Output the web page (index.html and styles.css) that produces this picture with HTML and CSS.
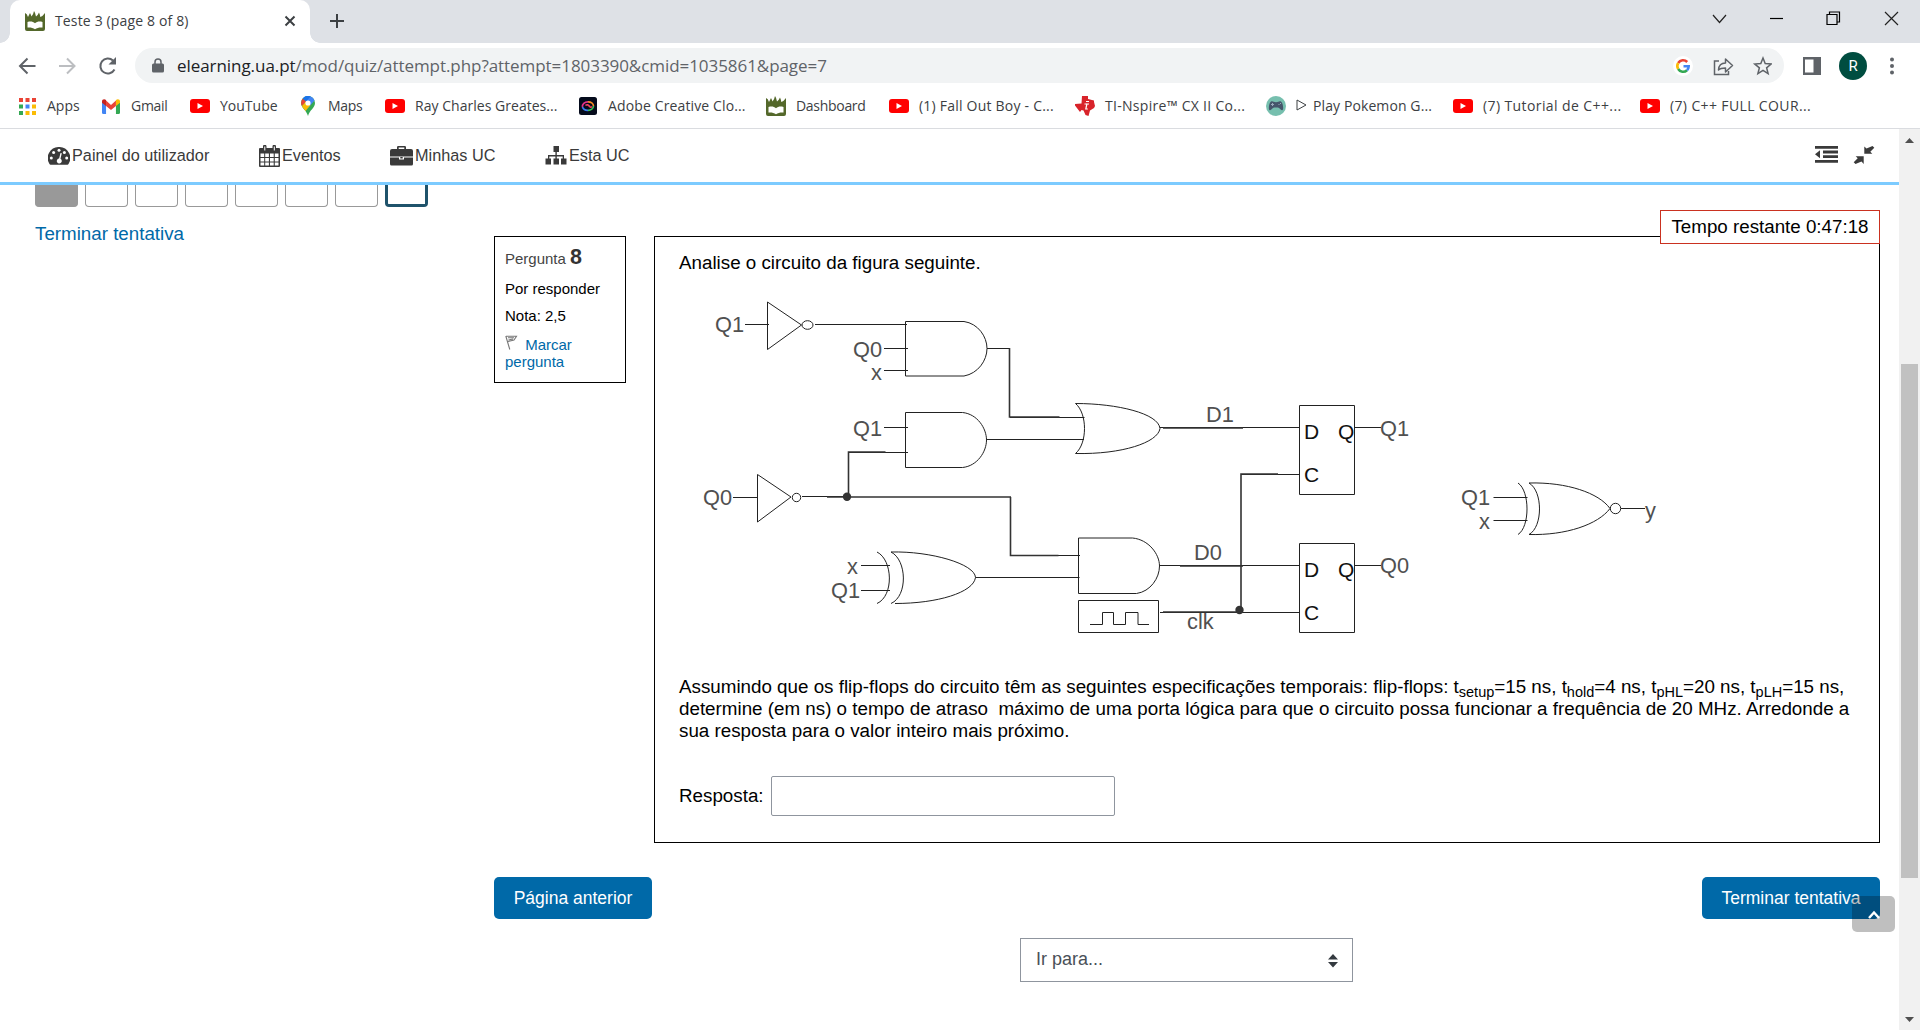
FILE: index.html
```html
<!DOCTYPE html>
<html lang="pt">
<head>
<meta charset="utf-8">
<title>Teste 3 (page 8 of 8)</title>
<link rel="stylesheet" href="styles.css">
</head>
<body>
<svg class="defs" width="0" height="0" aria-hidden="true">
  <symbol id="ua" viewBox="0 0 20 20"><path fill="#54682b" d="M0 2q2 .5 3 4Q4 4 5 2q1 1.500 1.500 3.500Q8.500 3 9 0q1.500 2 2 5.500Q13 4 14 1.500q1 2 1.300 4.500Q18 5 20 2v16q0 2-2 2H2q-2 0-2-2z"/><path fill="#fff" d="M2.500 11c3-.8 5.500-.5 7.500 1.200 2-1.700 4.500-2 7.500-1.200v5.500c-2.500-.2-5.500 0-7.500 1.800-2-1.800-5-2-7.500-1.800z"/></symbol>
  <symbol id="yt" viewBox="0 0 20 14"><rect width="20" height="14" rx="3" fill="#f00"/><path fill="#fff" d="M7.500 4v6l5.500-3z"/></symbol>
</svg>
<header class="tabs">
  <div class="tab">
    <svg class="fav" width="20" height="20"><use href="#ua"/></svg>
    <span class="tab-title">Teste 3 (page 8 of 8)</span>
    <svg class="tab-close" width="12" height="12" viewBox="0 0 12 12"><path d="M1.500 1.500l9 9M10.500 1.500l-9 9" stroke="#3c4043" stroke-width="2"/></svg>
  </div>
  <svg class="plus" width="16" height="16" viewBox="0 0 16 16"><path d="M8 1v14M1 8h14" stroke="#3c4043" stroke-width="2"/></svg>
  <svg class="winctl" width="200" height="24" viewBox="0 0 200 24" fill="none" stroke="#222" stroke-width="1.200"><path d="M13 9l6.500 7.500L26 9"/><path d="M70 12.500h13" stroke="#000"/><path d="M127 8.500h10v10h-10zM129.500 8.500v-2.500h10v10h-2.500" stroke="#000"/><path d="M185 6l13 13M198 6l-13 13"/></svg>
</header>
<div class="toolbar">
  <svg class="navs" width="104" height="24" viewBox="0 0 104 24" fill="none" stroke-width="2"><path stroke="#5f6368" d="M17.500 12H2.500M9.500 4.500L2 12l7.500 7.500"/><path stroke="#bcbec1" d="M41 12h15M49 4.500l7.500 7.500-7.500 7.500"/><path stroke="#5f6368" d="M96.500 15.500A7.500 7.500 0 1 1 95 6.500"/><path fill="#5f6368" d="M98 3v7.500h-7.500z"/></svg>
  <div class="omnibox">
    <svg width="12" height="16" viewBox="0 0 12 16"><path fill="#5f6368" d="M1.500 5.500h9A1.500 1.500 0 0 1 12 7v6a1.500 1.500 0 0 1-1.500 1.500h-9A1.500 1.500 0 0 1 0 13V7a1.500 1.500 0 0 1 1.500-1.500z"/><path fill="none" stroke="#5f6368" stroke-width="1.500" d="M3 6V4a3 3 0 0 1 6 0v2"/></svg>
    <span class="url"><b>elearning.ua.pt</b>/mod/quiz/attempt.php?attempt=1803390&amp;cmid=1035861&amp;page=7</span>
    <svg class="omni-icons" width="100" height="24" viewBox="0 0 100 24" fill="none"><circle cx="11" cy="12" r="10" fill="#fff"/><g stroke-width="2.600"><path stroke="#ea4335" d="M6.200 9A5.700 5.700 0 0 1 15.200 8"/><path stroke="#fbbc05" d="M6.200 15A5.700 5.700 0 0 1 6.200 9"/><path stroke="#34a853" d="M15 16.200A5.700 5.700 0 0 1 6.200 15"/><path stroke="#4285f4" d="M11.500 12.200h5.200A5.700 5.700 0 0 1 15 16.200"/></g><g stroke="#5f6368" stroke-width="1.500"><path d="M47 7h-4.500v13.500h14V17"/><path d="M46.500 16c.3-5 3-7 7-7V5l7 6.500-7 6.500V14c-3.500 0-5.500.5-7 2z" stroke-linejoin="round"/><path d="M91 4l2.200 5.600 6 .4-4.600 3.800 1.500 5.800L91 16.400l-5.100 3.200 1.500-5.800L82.800 10l6-.4z"/></g></svg>
  </div>
  <svg class="panel" width="18" height="18" viewBox="0 0 18 18"><path fill="#5f6368" fill-rule="evenodd" d="M0 0h18v18H0zM2 2.500v13h8.500v-13z"/></svg>
  <span class="avatar">R</span>
  <svg class="dots" width="4" height="18" viewBox="0 0 4 18" fill="#5f6368"><circle cx="2" cy="2.500" r="2"/><circle cx="2" cy="9" r="2"/><circle cx="2" cy="15.500" r="2"/></svg>
</div>
<nav class="bookmarks">
  <a class="bm b1"><svg width="17" height="17" viewBox="0 0 17 17"><path fill="#ea4335" d="M0 0h4v4H0zM6.500 0h4v4h-4zM13 0h4v4h-4z"/><path fill="#34a853" d="M0 6.500h4v4H0zM0 13h4v4H0z"/><path fill="#4285f4" d="M6.500 6.500h4v4h-4z"/><path fill="#fbbc05" d="M13 6.500h4v4h-4zM6.500 13h4v4h-4zM13 13h4v4h-4z"/></svg><span>Apps</span></a>
  <a class="bm b2"><svg width="18" height="15" viewBox="0 0 20 15" preserveAspectRatio="none"><path fill="#4285f4" d="M0 3l4.500 3v9H1.500A1.500 1.500 0 0 1 0 13.500z"/><path fill="#34a853" d="M20 3l-4.500 3v9h3a1.500 1.500 0 0 0 1.500-1.500z"/><path fill="#ea4335" d="M4.500 1.500L10 6l5.500-4.500V7L10 11 4.500 7z"/><path fill="#c5221f" d="M0 2.500C0 .3 2.500-.6 4.500 1v6L0 3.800z"/><path fill="#fbbc04" d="M20 2.500C20 .3 17.500-.6 15.500 1v6L20 3.800z"/></svg><span>Gmail</span></a>
  <a class="bm b3"><svg width="20" height="14"><use href="#yt"/></svg><span>YouTube</span></a>
  <a class="bm b4"><svg width="14" height="20" viewBox="0 0 14 20"><path fill="#34a853" d="M0 7a7 7 0 0 1 14 0c0 5-5.500 7-7 13C5.500 14 0 12 0 7z"/><path fill="#4285f4" d="M3 1.200A7 7 0 0 1 13.500 4.500L7 12z"/><path fill="#1a73e8" d="M1.500 2.700A7 7 0 0 1 9.500.4L5 5.500z"/><path fill="#ea4335" d="M1.500 2.700L5 5.500 1 10A7 7 0 0 1 1.500 2.700z"/><path fill="#fbbc04" d="M1 10l4-4.500L9.500 9l-5 6C3 13 1.500 11.500 1 10z"/><circle cx="7" cy="7" r="2.600" fill="#fff"/></svg><span>Maps</span></a>
  <a class="bm b5"><svg width="20" height="14"><use href="#yt"/></svg><span>Ray Charles Greates...</span></a>
  <a class="bm b6"><svg width="18" height="18" viewBox="0 0 18 18" fill="none" stroke-width="1.700"><rect width="18" height="18" rx="2.500" fill="#050b1c"/><path stroke="#e8308a" d="M3.500 10A5.500 4.500 0 0 1 9 4.800"/><path stroke="#f58a24" d="M9 4.800A5.200 4.400 0 0 1 14.500 9"/><path stroke="#39c556" d="M14.500 9A5.500 4.500 0 0 1 9 13.300"/><path stroke="#3a7df0" d="M9 13.300A5.500 4.500 0 0 1 3.500 10"/><path stroke="#ee4360" d="M6.500 8.500c1.500-1.500 3-.5 4 .8s1.500 1.200 2.500.2"/></svg><span>Adobe Creative Clo...</span></a>
  <a class="bm b7"><svg width="20" height="20"><use href="#ua"/></svg><span>Dashboard</span></a>
  <a class="bm b8"><svg width="20" height="14"><use href="#yt"/></svg><span>(1) Fall Out Boy - C...</span></a>
  <a class="bm b9"><svg width="20" height="20" viewBox="0 0 20 20"><path fill="#d8232a" d="M7 0h6v3l6 1.500V6l1 4-1 2-4 2.500-1.500 5.500-3-1-2-4.500-2-.5-1.500 2L0 9.500V8l6.500-.5z"/><path d="M11 5.500h3M9.500 8H14M12 7.500l-1.200 5.500h2" stroke="#fff" stroke-width="1.200" fill="none"/></svg><span>TI-Nspire™ CX II Co...</span></a>
  <a class="bm b10"><svg width="20" height="20" viewBox="0 0 20 20"><circle cx="10" cy="10" r="10" fill="#76bfae"/><path fill="#46566b" d="M5 5.500c2-.8 2.500.7 5 .7s3-1.500 5-.7c1.800 1 3 7.500 1.500 8.500s-3-2.500-4.500-2.500H8c-1.500 0-3 3.500-4.500 2.500S3.200 6.500 5 5.500z"/><path fill="#9ab" d="M5 8h1v-1h1v1h1v1H7v1H6V9H5zM12.500 8h1v1h-1zM14 7h1v1h-1z"/></svg><span><svg class="tri" width="11" height="12" viewBox="0 0 11 12"><path d="M1 1v10L10 6z" fill="none" stroke="#3c4043"/></svg>Play Pokemon G...</span></a>
  <a class="bm b11"><svg width="20" height="14"><use href="#yt"/></svg><span>(7) Tutorial de C++...</span></a>
  <a class="bm b12"><svg width="20" height="14"><use href="#yt"/></svg><span>(7) C++ FULL COUR...</span></a>
</nav>
<div class="viewport">
<div class="page">
  <nav class="sitenav">
    <a class="n1"><svg width="22" height="18" viewBox="0 0 22 18"><path fill="#3a3a3a" d="M11 0a11 11 0 0 1 9.500 17q-.4.700-1 .7h-17q-.6 0-1-.7A11 11 0 0 1 11 0z"/><g fill="#fff"><circle cx="11" cy="3.300" r="1.500"/><circle cx="5.600" cy="5.500" r="1.500"/><circle cx="3.300" cy="11" r="1.500"/><circle cx="16.400" cy="5.500" r="1.500"/><circle cx="18.700" cy="11" r="1.500"/><path d="M12.500 6l1.300.3-1.300 5.500a2.500 2.500 0 1 1-1.400-.3z"/></g></svg>Painel do utilizador</a>
    <a class="n2"><svg width="21" height="22" viewBox="0 0 21 22"><path fill="#3a3a3a" d="M1 3h3V1.500a1.700 1.700 0 0 1 3.500 0V3h6V1.500a1.700 1.700 0 0 1 3.500 0V3h3a1 1 0 0 1 1 1v17a1 1 0 0 1-1 1H1a1 1 0 0 1-1-1V4a1 1 0 0 1 1-1z"/><path fill="#fff" d="M1.500 8.500h3.700v3.500H1.500zM6.200 8.500h3.700v3.500H6.200zM11 8.500h3.700v3.500H11zM15.800 8.500h3.700v3.500h-3.700zM1.500 13h3.700v3.500H1.500zM6.200 13h3.700v3.500H6.200zM11 13h3.700v3.500H11zM15.800 13h3.700v3.500h-3.700zM1.500 17.500h3.700v3H1.500zM6.200 17.500h3.700v3H6.200zM11 17.500h3.700v3H11zM15.800 17.500h3.700v3h-3.700zM5.300 1.500h1v4h-1zM14.800 1.500h1v4h-1z"/></svg>Eventos</a>
    <a class="n3"><svg width="23" height="20" viewBox="0 0 23 20"><path fill="#3a3a3a" fill-rule="evenodd" d="M7 3V1.200Q7 0 8.200 0h6.600Q16 0 16 1.200V3h5q2 0 2 2v5.500H0V5q0-2 2-2zM8.700 1.600V3h5.600V1.600zM0 11.500h9v2h5v-2h9V18q0 1.500-1.500 1.500h-20Q0 19.500 0 18zM10.300 11h2.400v1.500h-2.400z"/></svg>Minhas UC</a>
    <a class="n4"><svg width="22" height="19" viewBox="0 0 22 19"><path fill="#3a3a3a" d="M8.500 0h5.500v6h-2.200v3H19v3.500h2.500v6H16v-6h1.700v-2h-5.900v2H14v6H8.500v-6h1.900v-2H4.300v2H6v6H.5v-6H3V9h7.400V6H8.500z"/></svg>Esta UC</a>
    <svg class="nav-tools" width="60" height="20" viewBox="0 0 60 20" fill="#3a3a3a"><path d="M0 1h23v2.800H0zM8 5.600h15v2.800H8zM8 10.200h15V13H8zM0 14.900h23v2.800H0zM0 9.300l5-4v8z"/><path d="M57.500 1l1.800 1.800-4 4 2 2h-8V1.500l2.200 2zM40.500 19l-1.800-1.800 4-4-2-2h8v7.800l-2.200-2.500z"/></svg>
  </nav>
  <main class="content">
    <aside class="quiznav">
      <div class="qbtns"><i class="done"></i><i></i><i></i><i></i><i></i><i></i><i></i><i class="cur"></i></div>
      <a class="finish">Terminar tentativa</a>
    </aside>
    <section class="attempt">
      <div class="que">
        <div class="info">
          <p class="qno">Pergunta <b>8</b></p>
          <p class="state">Por responder</p>
          <p class="grade">Nota: 2,5</p>
          <p class="flag"><svg width="14" height="15" viewBox="0 0 14 15" fill="none" stroke="#777" stroke-width="1.100"><path d="M.8 1l4 13.500M1 1.200h10.500L9 5 3 6.500M3 2.800h6M3.500 5l4.500-1"/></svg> Marcar<br>pergunta</p>
        </div>
        <div class="question">
          <div class="timer">Tempo restante 0:47:18</div>
          <p class="stem">Analise o circuito da figura seguinte.</p>
          <svg class="circuit" width="1000" height="360" viewBox="680 290 1000 360">
            <g class="wire">
              <path d="M745 324.500h24M767.500 302v47.500l34-24.500zM815 324.500h92M884 348.500h24M884 370.500h24"/>
              <ellipse cx="807.500" cy="325" rx="5.500" ry="4.300"/>
              <path d="M905.500 321.500h58.500c14 2 23 15 23 27s-9 25-23 27.500h-58.500zM987 348.500h22.500"/>
              <path d="M884 427.500h24M849 452.500h59M905.500 412.500h57c15 1.500 24 16 24 27.500s-9 26-24 27.500h-57zM987 439.500h97"/>
              <path d="M733 497.500h24M757.500 474.500v47.500l33.500-25zM802 496.500h45"/>
              <circle cx="796.500" cy="497.500" r="4.200"/>
              <path d="M1010 417.500h74.500M1075.500 403.500c42 0 83 10 84.500 25-2 14-38 26-84.500 25 12-10 12-40 0-50zM1160 427.500h140"/>
              <path d="M877 552c16 8 17 44 0 51.500M891 552c16 8 17 44 0 51.500M891 552c40-1 84 12 84.500 25.500-2 15-38 26-80.500 26M861 565.500h29M861 590.500h29M975.500 577.500h104"/>
              <path d="M1078.500 538h54c16 1.500 27 16 27 28s-9 25.500-23 27.500h-58zM1160 565.500h140M1010 555.500h70M1078.500 600.500h80v32h-80zM1160 612.500h140"/>
              <path d="M1090 624.500h12.500v-12h11v12h12v-12h12.500v12h11"/>
              <path d="M1299.500 405.500h55v89h-55zM1299.500 543.500h55v89h-55zM1355 427.500h26M1355 565.500h26M1241 474.500h59"/>
              <path d="M1493.500 497.500h34M1493.500 520.500h34M1518 483c12 8 12 44 0 51.500M1529 483c14 8 14 44 0 51.500M1529 483c38-1 70 10 81 25.500-12 16-44 27-81 26M1621 508.500h24"/>
              <circle cx="1615.500" cy="508.500" r="5.200"/>
            </g>
            <path class="heavy" d="M1009.500 348v69h50M848.500 496.500v-44.500h37M827 497h184M1010.500 497v58.500h48M1163 428h80M1180 566h63M1163 612h80M1241 612v-138h37"/>
            <circle cx="847" cy="496.800" r="4.200" fill="#333"/><circle cx="1239.500" cy="610" r="4.200" fill="#333"/>
            <g class="lbl">
              <text x="715" y="332">Q1</text><text x="853" y="357">Q0</text><text x="871" y="379.500">x</text><text x="853" y="436">Q1</text><text x="703" y="505">Q0</text>
              <text x="847" y="574">x</text><text x="831" y="598">Q1</text><text x="1206" y="422">D1</text><text x="1194" y="560">D0</text><text x="1187" y="628.500">clk</text>
              <text x="1380" y="436">Q1</text><text x="1380" y="573">Q0</text><text x="1461" y="505">Q1</text><text x="1479" y="528.500">x</text><text x="1645" y="518">y</text>
            </g>
            <g class="pin"><text x="1304" y="439">D</text><text x="1338" y="439">Q</text><text x="1304" y="482">C</text><text x="1304" y="577">D</text><text x="1338" y="577">Q</text><text x="1304" y="620">C</text></g>
          </svg>
          <p class="spec">Assumindo que os flip-flops do circuito têm as seguintes especificações temporais: flip-flops: t<sub>setup</sub>=15 ns, t<sub>hold</sub>=4 ns, t<sub>pHL</sub>=20 ns, t<sub>pLH</sub>=15 ns,<br>determine (em ns) o tempo de atraso&nbsp; máximo de uma porta lógica para que o circuito possa funcionar a frequência de 20 MHz. Arredonde a<br>sua resposta para o valor inteiro mais próximo.</p>
          <label class="answer">Resposta: <input type="text"></label>
        </div>
      </div>
      <div class="actions"><button>Página anterior</button><button class="end">Terminar tentativa</button></div>
      <div class="jump">Ir para...<svg width="10" height="14" viewBox="0 0 10 14"><path fill="#343a40" d="M0 5.500L5 0l5 5.500zM0 8h10l-5 5.500z"/></svg></div>
    </section>
  </main>
  <div class="totop"><svg width="14" height="10" viewBox="0 0 14 10"><path d="M2 8l5-5.500L12 8" fill="none" stroke="#fff" stroke-width="2.400"/></svg></div>
</div>
<div class="scroll">
  <svg width="9" height="5" viewBox="0 0 9 5"><path fill="#505050" d="M0 5l4.500-5L9 5z"/></svg>
  <div class="thumb"></div>
  <svg width="9" height="5" viewBox="0 0 9 5"><path fill="#505050" d="M0 0l4.500 5L9 0z"/></svg>
</div>
</div>
</body>
</html>
```
FILE: styles.css
```css
* { box-sizing: border-box; }
body { margin: 0; width: 1920px; height: 1030px; overflow: hidden; background: #fff; font-family: "Liberation Sans", Arial, sans-serif; color: #000; display: flex; flex-direction: column; }
p { margin: 0; }
svg { flex: none; }
.defs { position: absolute; }
.tabs { height: 43px; background: #dee1e6; display: flex; flex: none; padding-left: 10px; font-family: "Open Sans", "Noto Sans", sans-serif; }
.tab { width: 300px; height: 43px; background: #fff; border-radius: 10px 10px 0 0; display: flex; align-items: center; padding: 0 14px 2px 15px; position: relative; }
.tab::before, .tab::after { content: ""; position: absolute; bottom: 0; width: 10px; height: 10px; }
.tab::before { left: -10px; background: radial-gradient(circle at 0 0, transparent 9.5px, #fff 10px); }
.tab::after { right: -10px; background: radial-gradient(circle at 100% 0, transparent 9.5px, #fff 10px); }
.tab-title { margin-left: 10px; font-size: 14px; letter-spacing: .15px; color: #3c4043; flex: 1; white-space: nowrap; }
.plus { margin: 13px 0 0 19px; }
.winctl { margin: 6px 20px 0 auto; }
.toolbar { height: 45px; flex: none; display: flex; align-items: center; padding-left: 18px; }
.navs { margin-right: 13px; }
.omnibox { width: 1649px; height: 35px; border-radius: 18px; background: #f1f3f4; display: flex; align-items: center; padding: 0 12px 0 17px; font-family: "Open Sans", "Noto Sans", sans-serif; }
.url { margin-left: 13px; font-size: 17px; letter-spacing: -.06px; color: #5f6368; flex: 1; white-space: nowrap; }
.url b { font-weight: 400; color: #202124; }
.panel { margin-left: 19px; }
.avatar { width: 28px; height: 28px; border-radius: 50%; background: #004d40; color: #fff; font: 15px/28px Roboto, sans-serif; text-align: center; margin-left: 18px; }
.dots { margin-left: 23px; }
.bookmarks { height: 41px; flex: none; border-bottom: 1px solid #dadce0; display: flex; padding-left: 19px; font: 14px "Open Sans", "Noto Sans", sans-serif; color: #3c4043; }
.bm { display: flex; align-items: center; height: 36px; white-space: nowrap; letter-spacing: -.3px; flex: none; }
.bm span { margin-left: 10px; padding-bottom: 1px; }
.b1 { width: 83px; letter-spacing: 0; }
.b1 span, .b6 span { margin-left: 11px; }
.b2 { width: 88px; } .b2 span { margin-left: 11px; }
.b3 { width: 111px; letter-spacing: 0; }
.b4 { width: 84px; } .b4 span { margin-left: 13px; }
.b5 { width: 194px; letter-spacing: .03px; }
.b6 { width: 187px; letter-spacing: .13px; }
.b7 { width: 123px; }
.b8 { width: 186px; letter-spacing: .22px; }
.b9 { width: 191px; letter-spacing: .3px; }
.b10 { width: 187px; letter-spacing: .1px; }
.b11 { width: 187px; letter-spacing: .4px; }
.b12 { width: 200px; letter-spacing: .37px; }
.tri { margin-right: 6px; }
.viewport { display: flex; flex: 1; min-height: 0; }
.page { width: 1899px; position: relative; display: flex; flex-direction: column; }
.sitenav { height: 56px; flex: none; border-bottom: 3px solid #7ccbff; display: flex; align-items: center; color: #3a3a3a; font-size: 16.25px; padding: 0 24px 0 48px; }
.sitenav a { display: flex; align-items: center; white-space: nowrap; gap: 2px; flex: none; }
.n1 { width: 211px; } .n2 { width: 131px; } .n3 { width: 155px; }
.nav-tools { margin: 0 0 2px auto; }
.content { display: flex; flex: 1; }
.quiznav { width: 459px; margin-left: 35px; flex: none; }
.qbtns { display: flex; gap: 7px; }
.qbtns i { width: 43px; height: 22px; border: 1px solid #999; border-top: 0; border-radius: 0 0 4px 4px; }
.qbtns .done { background: #999; }
.qbtns .cur { border: 3px solid #1f536b; border-top: 0; }
.finish { display: block; margin-top: 16px; font-size: 18.75px; line-height: 22px; color: #0069a8; }
.attempt { width: 1386px; padding-top: 51px; }
.que { display: flex; justify-content: space-between; align-items: flex-start; }
.info { width: 132px; height: 147px; border: 1px solid #000; padding: 11px 10px; font-size: 15px; line-height: 17px; }
.qno { height: 32px; color: #444; margin-top: -1px; }
.qno b { font-size: 21.5px; color: #333; line-height: 20px; }
.state { height: 27px; padding-top: 1px; }
.grade { height: 29px; padding-top: 1px; }
.flag { color: #0069a8; line-height: 17px; }
.flag svg { margin-right: 2px; }
.question { width: 1226px; height: 607px; border: 1px solid #000; position: relative; padding: 15px 0 0 24px; font-size: 18.8px; line-height: 22px; }
.timer { position: absolute; right: -1px; top: -27px; width: 220px; height: 34px; border: 1px solid #ca3120; background: #fff; line-height: 32px; text-align: center; white-space: nowrap; font-size: 18.75px; }
.circuit { display: block; margin: 16px 0 0 1px; }
.wire { fill: none; stroke: #222; stroke-width: 1; }
.heavy { fill: none; stroke: #333; stroke-width: 1.6; }
.lbl { font-size: 21.8px; fill: #505050; }
.pin { font-size: 21px; fill: #111; }
.spec { margin-top: 26px; white-space: nowrap; }
.spec sub { font-size: 14.5px; line-height: 0; position: relative; bottom: -.28em; vertical-align: baseline; }
.answer { display: flex; align-items: center; margin-top: 34px; }
.answer input { width: 344px; height: 40px; margin-left: 7px; border: 1px solid #8f959e; border-radius: 2px; padding: 0; }
.actions { display: flex; justify-content: space-between; margin-top: 34px; }
.actions button { width: 158px; height: 42px; border: 0; border-radius: 5px; background: #0069a8; color: #fff; font: 17.5px "Liberation Sans", Arial, sans-serif; padding: 0; }
.actions .end { width: 178px; }
.jump { width: 333px; height: 44px; margin: 19px 0 0 526px; border: 1px solid #8f959e; display: flex; align-items: center; justify-content: space-between; padding: 0 14px 2px 15px; font-size: 18px; color: #495057; }
.jump svg { margin-top: 3px; }
.totop { position: absolute; left: 1852px; top: 767px; width: 43px; height: 36px; border-radius: 5px; background: rgba(0,0,0,.25); display: flex; justify-content: center; padding: 14px 0 0; }
.scroll { width: 21px; background: #f1f1f1; display: flex; flex-direction: column; align-items: center; padding: 9px 0 8px; }
.thumb { width: 17px; height: 514px; margin: 221px 0 auto; background: #c1c1c1; }
```
